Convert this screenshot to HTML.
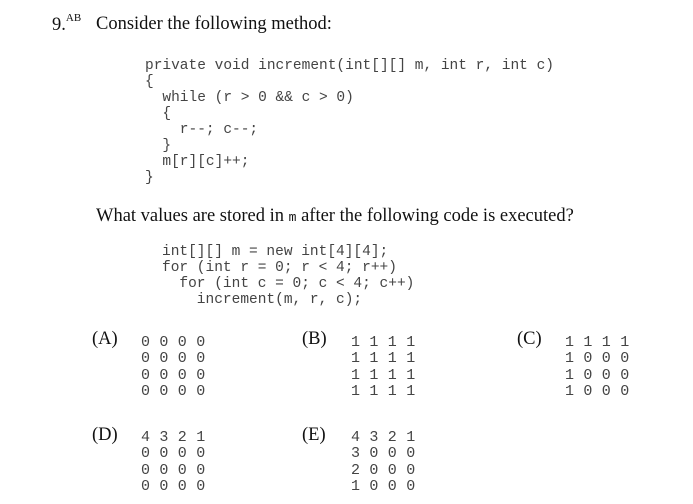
<!DOCTYPE html>
<html><head><style>
body{margin:0;width:693px;height:504px;background:#fff;position:relative;overflow:hidden}
.s{position:absolute;font-family:"Liberation Serif",serif;font-size:18.5px;color:#111;white-space:nowrap}
.m{position:absolute;font-family:"Liberation Mono",monospace;font-size:14.5px;line-height:16px;color:#444;white-space:pre;margin:0}
.g{position:absolute;font-family:"Liberation Mono",monospace;font-size:15px;line-height:16.3px;color:#444;white-space:pre;margin:0;letter-spacing:0.2px}
sup{font-size:11px;position:relative;top:-2px}
</style></head><body>
<div class="s" style="left:52px;top:14px">9.<sup>AB</sup></div>
<div class="s" style="left:96px;top:14px">Consider the following method:</div>
<pre class="m" style="left:145px;top:58px">private void increment(int[][] m, int r, int c)
{
  while (r &gt; 0 &amp;&amp; c &gt; 0)
  {
    r--; c--;
  }
  m[r][c]++;
}</pre>
<div class="s" style="left:96px;top:206px">What values are stored in <span style="font-family:'Liberation Mono',monospace;font-size:13px">m</span> after the following code is executed?</div>
<pre class="m" style="left:162px;top:244px">int[][] m = new int[4][4];
for (int r = 0; r &lt; 4; r++)
  for (int c = 0; c &lt; 4; c++)
    increment(m, r, c);</pre>
<div class="s" style="left:92px;top:329px">(A)</div>
<pre class="g" style="left:141px;top:335px">0 0 0 0
0 0 0 0
0 0 0 0
0 0 0 0</pre>
<div class="s" style="left:302px;top:329px">(B)</div>
<pre class="g" style="left:351px;top:335px">1 1 1 1
1 1 1 1
1 1 1 1
1 1 1 1</pre>
<div class="s" style="left:517px;top:329px">(C)</div>
<pre class="g" style="left:565px;top:335px">1 1 1 1
1 0 0 0
1 0 0 0
1 0 0 0</pre>
<div class="s" style="left:92px;top:425px">(D)</div>
<pre class="g" style="left:141px;top:430px">4 3 2 1
0 0 0 0
0 0 0 0
0 0 0 0</pre>
<div class="s" style="left:302px;top:425px">(E)</div>
<pre class="g" style="left:351px;top:430px">4 3 2 1
3 0 0 0
2 0 0 0
1 0 0 0</pre>
</body></html>
